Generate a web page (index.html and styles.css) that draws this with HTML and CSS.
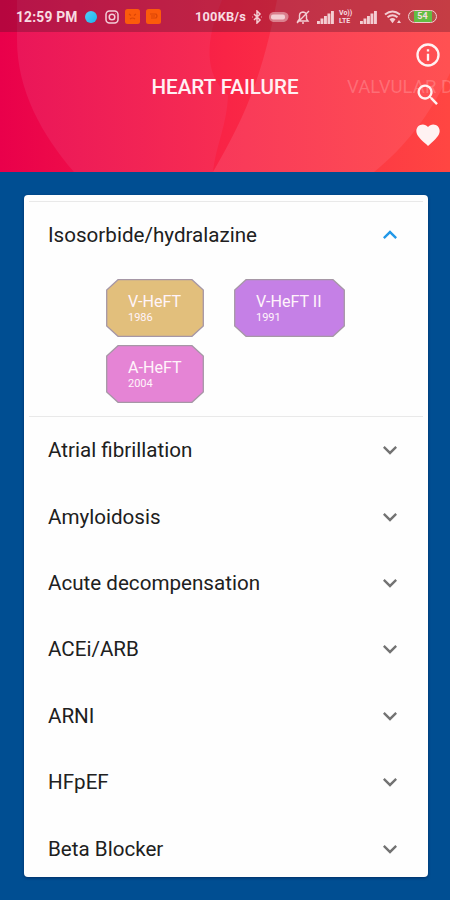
FILE: index.html
```html
<!DOCTYPE html>
<html lang="en">
<head>
<meta charset="utf-8">
<title>Heart failure</title>
<link rel="stylesheet" href="styles.css">
</head>
<body>
<svg width="0" height="0" class="defs">
  <symbol id="down" viewBox="0 0 24 24"><path d="M7.41 8.59 12 13.17l4.59-4.58L18 10l-6 6-6-6z"/></symbol>
  <symbol id="signal" viewBox="0 0 17 14"><path d="M0 11h2.900v3H0zM3.500 8.500h2.900V14H3.500zM7 6h2.900v8H7zM10.500 3.500h2.900V14h-2.900zM14 1h2.900v13H14z"/></symbol>
</svg>
<header class="hero">
  <svg class="backdrop" viewBox="0 0 450 172">
    <defs>
      <linearGradient id="base" x1="0" y1="0" x2="1" y2="0"><stop offset="0" stop-color="#e9004b"/><stop offset=".5" stop-color="#f92446"/><stop offset="1" stop-color="#ff4642"/></linearGradient>
      <linearGradient id="left" gradientUnits="userSpaceOnUse" x1="18" y1="0" x2="225" y2="0"><stop offset="0" stop-color="#ea1659"/><stop offset="1" stop-color="#f72d52"/></linearGradient>
      <linearGradient id="right" gradientUnits="userSpaceOnUse" x1="215" y1="0" x2="450" y2="0"><stop offset="0" stop-color="#f8385a"/><stop offset="1" stop-color="#ff5152"/></linearGradient>
    </defs>
    <path fill="url(#base)" d="M0 0h450v172H0z"/>
    <path fill="url(#left)" d="M17 0h205C205 40 204 75 228 95 227 125 216 145 213 172H74C42 135 17 90 17 40z"/>
    <path fill="url(#right)" d="M277 0h173v73C430 115 405 147 374 172H213C240 125 261 85 277 0z"/>
  </svg>
  <div class="status">
    <span class="time">12:59 PM</span>
    <span class="dot"></span>
    <svg class="insta" viewBox="0 0 14 14"><rect x="1" y="1" width="12" height="12" rx="3.500"/><circle cx="7" cy="7" r="2.800"/><path d="M10.300 3.500h.4"/></svg>
    <svg class="app first" viewBox="0 0 15 15"><rect width="15" height="15" rx="2.500"/><path d="M4 5l2 1.500M11 5 9 6.500M5 10q2.500-2 5 0"/></svg>
    <svg class="app" viewBox="0 0 15 15"><rect width="15" height="15" rx="2.500"/><path d="M4 5h6q2 2 0 4H5M5 7h4"/></svg>
    <span class="speed">100KB/s</span>
    <svg class="bt" viewBox="0 0 12 14"><path d="M3 4l6 6-3 3V1l3 3-6 6M1 7h.5M10.500 7h.5"/></svg>
    <svg class="pill" viewBox="0 0 20 12"><path d="M4 1h11q5 1 4.500 5T15 11H4q-4-1-4-5t4-5z" opacity=".5"/><rect x="2" y="3.500" width="14" height="5" rx="2"/></svg>
    <svg class="bell" viewBox="0 0 14 14"><path d="M2 11h10l-1.500-2V5.500q0-3-3.500-3.500-3.500.5-3.500 3.500V9zM6 13h2M1 13 13 1"/></svg>
    <svg class="signal one"><use href="#signal"/></svg>
    <span class="volte">Vo))<br>LTE</span>
    <svg class="signal two"><use href="#signal"/></svg>
    <svg class="wifi" viewBox="0 0 18 14"><path class="arc" d="M1 4.500q7.500-6 15 0M3.500 7.300q5-4 10 0"/><path d="M5.500 9.200q3-2.200 6 0l-3 4zM13 13l2-3 2 3z"/></svg>
    <span class="battery">54</span>
  </div>
  <h1>HEART FAILURE</h1>
  <span class="next">VALVULAR DISEASE</span>
  <nav class="actions">
    <svg viewBox="0 0 24 24"><path d="M11 7h2v2h-2zm0 4h2v6h-2zm1-9a10 10 0 1 0 0 20 10 10 0 0 0 0-20zm0 18a8 8 0 1 1 0-16 8 8 0 0 1 0 16z"/></svg>
    <svg viewBox="0 0 24 24"><path d="M15.500 14h-.79l-.28-.27A6.500 6.500 0 1 0 13.730 14.430l.27.28v.79l5 4.990L20.490 19zm-6 0a4.500 4.500 0 1 1 0-9 4.500 4.500 0 0 1 0 9z"/></svg>
    <svg viewBox="0 0 24 24"><path d="m12 21.350-1.450-1.320C5.400 15.360 2 12.280 2 8.500 2 5.420 4.420 3 7.500 3c1.740 0 3.410.81 4.500 2.090C13.090 3.810 14.760 3 16.500 3 19.580 3 22 5.420 22 8.500c0 3.780-3.400 6.860-8.550 11.540z"/></svg>
  </nav>
</header>
<main class="card">
  <section class="open">
    <div class="row"><span>Isosorbide/hydralazine</span><svg><use href="#down"/></svg></div>
    <div class="chips">
      <div class="chip gold"><svg viewBox="0 0 98 58"><path d="M12 .7H86L97.300 11V47L86 57.300H12L.7 47V11z"/></svg><b>V-HeFT</b><small>1986</small></div>
      <div class="chip violet"><svg viewBox="0 0 111 58"><path d="M12 .7H99L110.300 11V47L99 57.300H12L.7 47V11z"/></svg><b>V-HeFT II</b><small>1991</small></div>
      <div class="chip pink"><svg viewBox="0 0 98 58"><path d="M12 .7H86L97.300 11V47L86 57.300H12L.7 47V11z"/></svg><b>A-HeFT</b><small>2004</small></div>
    </div>
  </section>
  <div class="row"><span>Atrial fibrillation</span><svg><use href="#down"/></svg></div>
  <div class="row"><span>Amyloidosis</span><svg><use href="#down"/></svg></div>
  <div class="row"><span>Acute decompensation</span><svg><use href="#down"/></svg></div>
  <div class="row"><span>ACEi/ARB</span><svg><use href="#down"/></svg></div>
  <div class="row"><span>ARNI</span><svg><use href="#down"/></svg></div>
  <div class="row"><span>HFpEF</span><svg><use href="#down"/></svg></div>
  <div class="row"><span>Beta Blocker</span><svg><use href="#down"/></svg></div>
</main>
</body>
</html>
```
FILE: styles.css
```css
* { box-sizing: border-box; }
body {
  margin: 0;
  height: 900px;
  overflow: hidden;
  background: #004e92;
  font-family: Roboto, sans-serif;
}
svg { display: block; flex: none; }
.defs { position: absolute; }

.hero { position: relative; height: 172px; overflow: hidden; }
.backdrop { position: absolute; inset: 0; width: 450px; height: 172px; }
.status {
  position: relative;
  display: flex;
  align-items: center;
  height: 32px;
  padding: 1px 0 0 16px;
  background: rgba(75, 20, 40, .32);
  color: #f8dce2;
  fill: #f3cdd2;
  white-space: nowrap;
}
.status > * { flex: none; }
.time { width: 69px; font-size: 13.8px; font-weight: 700; letter-spacing: .2px; }
.dot { width: 12px; height: 12px; border-radius: 50%; background: linear-gradient(135deg, #58cdf5, #19b5ed); }
.insta { width: 14px; height: 14px; margin-left: 8px; fill: none; stroke: #f3cdd8; stroke-width: 1.5; }
.app { width: 15px; height: 15px; margin-left: 6px; fill: #fb5b0b; }
.app path { fill: none; stroke: #dc4606; stroke-width: 1.2; }
.speed { width: 55px; margin-left: 34px; font-size: 12.8px; font-weight: 700; letter-spacing: .2px; }
.bt { width: 12px; height: 14px; margin-left: 1px; fill: none; stroke: #f3cdd2; stroke-width: 1.5; }
.pill { width: 20px; height: 12px; margin-left: 6px; }
.bell { width: 14px; height: 14px; margin-left: 7px; fill: none; stroke: #f3cdd2; stroke-width: 1.4; }
.signal { width: 17px; height: 14px; margin-left: 7px; }
.volte { width: 15px; margin-left: 5px; font-size: 7px; line-height: 8px; font-weight: 700; }
.signal.two { margin-left: 6px; }
.wifi { width: 18px; height: 14px; margin-left: 7px; }
.wifi .arc { fill: none; stroke: #f3cdd2; stroke-width: 2; }
.battery {
  width: 29px;
  height: 13px;
  margin-left: 6px;
  border: 1.5px solid #f3cdd2;
  border-radius: 7px;
  background: linear-gradient(90deg, #b8524b 0 20%, #63be43 20% 85%, #b8524b 85%);
  font-size: 9px;
  line-height: 10px;
  font-weight: 700;
  text-align: center;
}
h1 {
  position: relative;
  margin: 42px 0 0;
  color: #fff0f3;
  font-size: 20.6px;
  line-height: 26px;
  font-weight: 500;
  text-align: center;
}
.next {
  position: absolute;
  left: 347px;
  top: 74px;
  color: rgba(255, 205, 205, .28);
  font-size: 18.6px;
  line-height: 26px;
  white-space: nowrap;
}
.actions {
  position: absolute;
  top: 41px;
  right: 8.5px;
  display: flex;
  flex-direction: column;
  gap: 12px;
  fill: #fff2f2;
}
.actions svg { width: 28px; height: 28px; }

.card {
  height: 682px;
  margin: 23px 22px 0 24px;
  padding: 6px 5px 0;
  overflow: hidden;
  border-radius: 4px;
  background: #fefefe;
  box-shadow: 0 1px 3px rgba(0, 15, 60, .5);
}
.open { height: 216px; border: solid #e9e9e9; border-width: 1px 0; }
.row {
  display: flex;
  align-items: center;
  justify-content: space-between;
  height: 66.4px;
  padding: 0 19px 0 19px;
  color: #202020;
  font-size: 20.6px;
}
.row svg { width: 28px; height: 28px; fill: #737373; }
.open .row svg { fill: #2399e8; transform: rotate(180deg); }
.chips {
  display: grid;
  grid-template-columns: 98px 111px;
  grid-auto-rows: 58px;
  gap: 8px 30px;
  padding: 11px 0 0 77px;
}
.chip {
  position: relative;
  display: flex;
  flex-direction: column;
  padding: 13px 0 0 22px;
  color: #fff4fa;
}
.chip svg { position: absolute; inset: 0; width: 100%; height: 100%; stroke: #a697a6; stroke-width: 1.3; }
.chip b { position: relative; font-size: 16.1px; line-height: 19px; font-weight: 400; }
.chip small { position: relative; font-size: 11px; line-height: 13px; }
.gold { fill: #e2bf7c; }
.violet { fill: #c580e6; }
.pink { fill: #e584d5; }
```
